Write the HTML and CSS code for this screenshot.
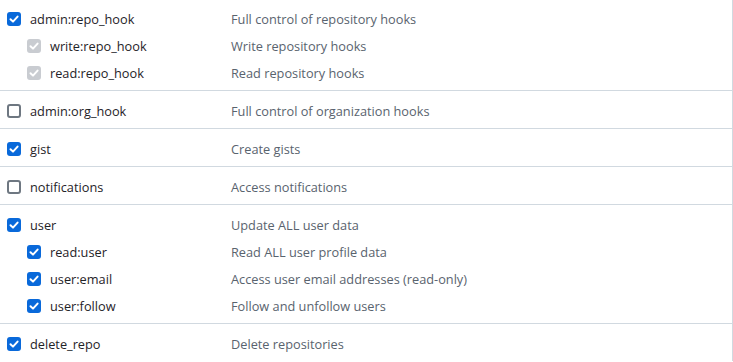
FILE: index.html
```html
<!DOCTYPE html>
<html lang="en">
  <head>
    <meta charset="UTF-8" />
    <meta name="viewport" content="width=device-width, initial-scale=1.0" />
    <title>Token scopes</title>
    <link rel="stylesheet" href="styles.css">
  </head>
  <body>
    <div class="scopes">
      <!-- admin:repo_hook -->
      <div class="scope-group">
        <div class="scope-row">
          <span class="check is-checked"><svg viewBox="0 0 14 14"><path d="M3.5 7.2 6 9.6 10.6 4.6" /></svg></span>
          <span class="scope-name">admin:repo_hook</span>
          <span class="scope-desc">Full control of repository hooks</span>
        </div>
        <div class="scope-row sub">
          <span class="check is-disabled"><svg viewBox="0 0 14 14"><path d="M3.5 7.2 6 9.6 10.6 4.6" /></svg></span>
          <span class="scope-name">write:repo_hook</span>
          <span class="scope-desc">Write repository hooks</span>
        </div>
        <div class="scope-row sub">
          <span class="check is-disabled"><svg viewBox="0 0 14 14"><path d="M3.5 7.2 6 9.6 10.6 4.6" /></svg></span>
          <span class="scope-name">read:repo_hook</span>
          <span class="scope-desc">Read repository hooks</span>
        </div>
      </div>

      <div class="scope-group">
        <div class="scope-row">
          <span class="check"></span>
          <span class="scope-name">admin:org_hook</span>
          <span class="scope-desc">Full control of organization hooks</span>
        </div>
      </div>

      <div class="scope-group">
        <div class="scope-row">
          <span class="check is-checked"><svg viewBox="0 0 14 14"><path d="M3.5 7.2 6 9.6 10.6 4.6" /></svg></span>
          <span class="scope-name">gist</span>
          <span class="scope-desc">Create gists</span>
        </div>
      </div>

      <div class="scope-group">
        <div class="scope-row">
          <span class="check"></span>
          <span class="scope-name">notifications</span>
          <span class="scope-desc">Access notifications</span>
        </div>
      </div>

      <!-- user and its sub scopes -->
      <div class="scope-group">
        <div class="scope-row">
          <span class="check is-checked"><svg viewBox="0 0 14 14"><path d="M3.5 7.2 6 9.6 10.6 4.6" /></svg></span>
          <span class="scope-name">user</span>
          <span class="scope-desc">Update ALL user data</span>
        </div>
        <div class="scope-row sub">
          <span class="check is-checked"><svg viewBox="0 0 14 14"><path d="M3.5 7.2 6 9.6 10.6 4.6" /></svg></span>
          <span class="scope-name">read:user</span>
          <span class="scope-desc">Read ALL user profile data</span>
        </div>
        <div class="scope-row sub">
          <span class="check is-checked"><svg viewBox="0 0 14 14"><path d="M3.5 7.2 6 9.6 10.6 4.6" /></svg></span>
          <span class="scope-name">user:email</span>
          <span class="scope-desc">Access user email addresses (read-only)</span>
        </div>
        <div class="scope-row sub">
          <span class="check is-checked"><svg viewBox="0 0 14 14"><path d="M3.5 7.2 6 9.6 10.6 4.6" /></svg></span>
          <span class="scope-name">user:follow</span>
          <span class="scope-desc">Follow and unfollow users</span>
        </div>
      </div>

      <div class="scope-group">
        <div class="scope-row">
          <span class="check is-checked"><svg viewBox="0 0 14 14"><path d="M3.5 7.2 6 9.6 10.6 4.6" /></svg></span>
          <span class="scope-name">delete_repo</span>
          <span class="scope-desc">Delete repositories</span>
        </div>
      </div>
    </div>
  </body>
</html>
```

FILE: styles.css
```css
body {
  margin: 0;
  padding: 0;
  font-family: 'Open Sans', 'Noto Sans', sans-serif;
  font-size: 12.75px;
  background-color: #ffffff;
  color: #1f2328;
}

/* list of token scopes, border on the right edge */
.scopes {
  width: 732px;
  border-right: 1px solid #d1d9e0;
  margin-top: -1px;
}

.scope-group {
  padding: 6px 0 4px;
  border-bottom: 1px solid #d1d9e0;
}

.scope-group:last-child {
  border-bottom: none;
}

.scope-row {
  display: flex;
  align-items: center;
  height: 27px;
  padding-left: 7px;
}

.scope-row.sub {
  padding-left: 27px;
}

.scope-name {
  flex: 0 0 auto;
  width: 201px;
  margin-left: 9px;
  font-weight: 500;
}

.scope-row.sub .scope-name {
  width: 181px;
  font-weight: 400;
}

.scope-desc {
  color: #59636e;
}

/* custom checkbox */
.check {
  flex: 0 0 auto;
  box-sizing: border-box;
  width: 14px;
  height: 14px;
  border: 2px solid #6e7781;
  border-radius: 3px;
  background-color: #ffffff;
  display: flex;
}

.check svg {
  width: 14px;
  height: 14px;
  margin: -2px;
  fill: none;
  stroke: #ffffff;
  stroke-width: 2;
  stroke-linecap: round;
  stroke-linejoin: round;
}

.check.is-checked {
  border: none;
  background-color: #0969da;
}

.check.is-checked svg,
.check.is-disabled svg {
  margin: 0;
}

.check.is-disabled {
  border: none;
  background-color: #c9ccd1;
}
```
